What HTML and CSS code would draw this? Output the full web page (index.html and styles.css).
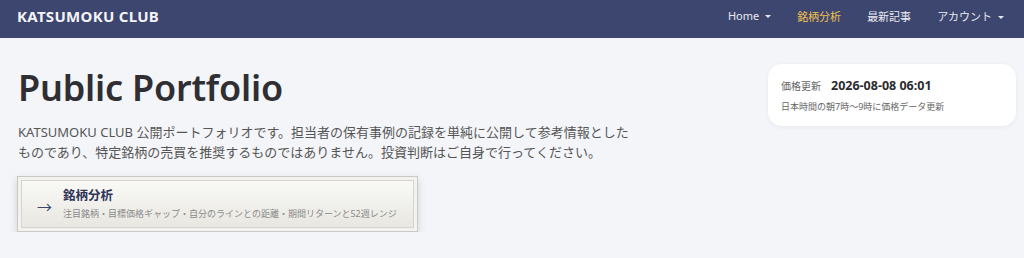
FILE: index.html
```html
<!DOCTYPE html>
<html lang="ja">
<head>
  <meta charset="UTF-8" />
  <meta name="viewport" content="width=device-width, initial-scale=1.0"/>
  <title>KATSUMOKU CLUB | Public Portfolio</title>
  <link rel="stylesheet" href="styles.css">
</head>
<body>

  <nav class="navbar">
    <div class="brand">KATSUMOKU CLUB</div>
    <ul class="nav-links">
      <li>Home <span class="caret"></span></li>
      <li class="active">銘柄分析</li>
      <li>最新記事</li>
      <li>アカウント <span class="caret"></span></li>
    </ul>
  </nav>

  <main class="page">
    <div class="intro">
      <h1 class="title">Public Portfolio</h1>
      <p class="lead">KATSUMOKU CLUB 公開ポートフォリオです。担当者の保有事例の記録を単純に公開して参考情報としたものであり、特定銘柄の売買を推奨するものではありません。投資判断はご自身で行ってください。</p>

      <a class="link-card" href="#">
        <div class="link-inner">
          <span class="arrow">→</span>
          <div>
            <div class="link-title">銘柄分析</div>
            <div class="link-sub">注目銘柄・目標価格ギャップ・自分のラインとの距離・期間リターンと52週レンジ</div>
          </div>
        </div>
      </a>
    </div>

    <aside class="update-card">
      <div class="update-row">
        <span class="update-label">価格更新</span>
        <span class="update-time">2026-08-08 06:01</span>
      </div>
      <div class="update-note">日本時間の朝7時〜9時に価格データ更新</div>
    </aside>
  </main>

</body>
</html>
```

FILE: styles.css
```css
* {
  box-sizing: border-box;
  margin: 0;
  padding: 0;
}

body {
  font-family: 'Noto Sans', 'Noto Sans CJK JP', sans-serif;
  background: #f4f5f9;
  color: #333;
}

.navbar {
  height: 38px;
  background: #3d466e;
  display: flex;
  justify-content: space-between;
  align-items: center;
  padding: 0 20px 0 17px;
}

.brand {
  color: #f4f4f8;
  font-size: 15px;
  font-weight: bold;
  letter-spacing: 0.3px;
  margin-top: -6px;
}

.nav-links {
  list-style: none;
  display: flex;
  gap: 26px;
  margin-top: -7px;
}

.nav-links li {
  color: #e8e9ef;
  font-size: 11px;
  cursor: pointer;
}

.nav-links li.active {
  color: #f2c14e;
}

.caret {
  display: inline-block;
  width: 0;
  height: 0;
  border-left: 3.5px solid transparent;
  border-right: 3.5px solid transparent;
  border-top: 3.5px solid #e8e9ef;
  vertical-align: middle;
  margin-left: 3px;
}

.page {
  display: flex;
  justify-content: space-between;
  padding: 26px 8px 0 18px;
}

.title {
  font-size: 36px;
  font-weight: 600;
  color: #2f2f33;
  letter-spacing: -0.2px;
  margin-top: 2px;
  line-height: 44px;
}

.lead {
  font-size: 13px;
  line-height: 20px;
  color: #555;
  max-width: 612px;
  margin-top: 12px;
}

.link-card {
  display: block;
  width: 401px;
  margin-top: 14px;
  margin-left: -1px;
  border: 1px solid #c9c9c7;
  background: #f3f2ee;
  padding: 3px;
  box-shadow: 0 3px 8px rgba(0, 0, 0, 0.15);
  text-decoration: none;
}

.link-inner {
  display: flex;
  align-items: center;
  border: 1px solid #d4d3cf;
  background: linear-gradient(#f9f9f6, #e8e7e1);
  padding: 4px 10px 4px 15px;
  height: 48px;
}

.arrow {
  color: #3d466e;
  font-size: 15px;
  width: 26px;
  margin-top: 4px;
}

.link-title {
  color: #2e3458;
  font-size: 12.5px;
  font-weight: bold;
  line-height: 18px;
}

.link-sub {
  color: #8a8a8a;
  font-size: 9px;
  line-height: 16px;
  margin-top: 1px;
  white-space: nowrap;
}

.update-card {
  width: 248px;
  height: 62px;
  background: #fff;
  border-radius: 14px;
  box-shadow: 0 1px 4px rgba(0, 0, 0, 0.05);
  padding: 13px 13px;
}

.update-row {
  display: flex;
  align-items: baseline;
  gap: 10px;
}

.update-label {
  font-size: 10px;
  color: #666;
}

.update-time {
  font-size: 12.5px;
  font-weight: bold;
  color: #2b2b2f;
}

.update-note {
  font-size: 9px;
  color: #666;
  margin-top: 6px;
}
```
